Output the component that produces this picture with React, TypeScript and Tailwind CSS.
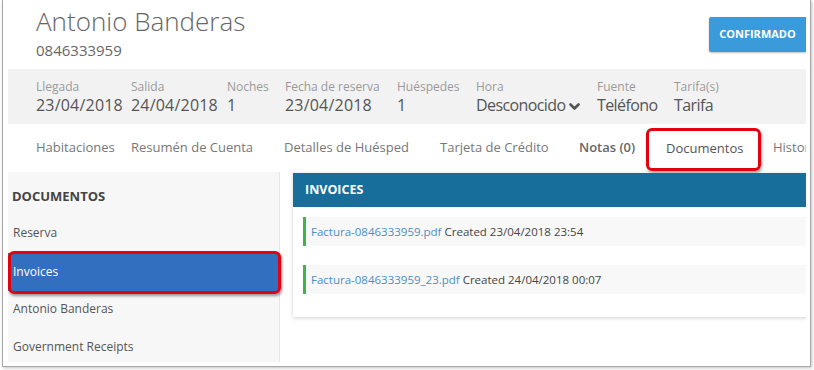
import React from "react";

const font = { fontFamily: '"Open Sans", "Noto Sans", sans-serif' };

function Chevron() {
  return (
    <svg width="11" height="8" viewBox="0 0 11 8" className="ml-[4px] mt-[3px]">
      <path d="M1.5 1.5 L5.5 5.5 L9.5 1.5" fill="none" stroke="#555" strokeWidth="2.6" strokeLinecap="round" strokeLinejoin="round" />
    </svg>
  );
}

const infos: { label: string; value: string; w: string; word?: boolean; chevron?: boolean }[] = [
  { label: "Llegada", value: "23/04/2018", w: "w-[95px]" },
  { label: "Salida", value: "24/04/2018", w: "w-[96px]" },
  { label: "Noches", value: "1", w: "w-[58px]" },
  { label: "Fecha de reserva", value: "23/04/2018", w: "w-[112px]" },
  { label: "Huéspedes", value: "1", w: "w-[79px]" },
  { label: "Hora", value: "Desconocido", w: "w-[121px]", word: true, chevron: true },
  { label: "Fuente", value: "Teléfono", w: "w-[77px]", word: true },
  { label: "Tarifa(s)", value: "Tarifa", w: "w-[80px]", word: true },
];

export default function App() {
  return (
    <div className="w-[814px] h-[370px] bg-white overflow-hidden" style={font}>
      <div className="ml-[2px] w-[809px] h-[367px] border-l border-r border-b border-[#a8a8a8] shadow-[1px_1px_3px_rgba(0,0,0,0.25)] bg-white pl-[5px] pr-[4px] pb-[4px]">
        <div className="w-[798px] h-[362px] overflow-hidden flex flex-col">
          {/* header */}
          <div className="h-[69px] flex justify-between items-start shrink-0">
            <div className="pl-[28px] pt-[4px]">
              <div className="text-[26px] leading-[34px] font-light text-[#666]">Antonio Banderas</div>
              <div className="text-[15px] leading-[20px] text-[#666] mt-[2px]">0846333959</div>
            </div>
            <div className="mt-[17px] w-[97px] h-[35px] bg-[#3b9ad9] text-white text-[11px] font-bold flex items-center justify-center shadow-[0_1px_2px_rgba(0,0,0,0.25)] rounded-l-[2px]">
              CONFIRMADO
            </div>
          </div>
          {/* info bar */}
          <div className="h-[55px] bg-[#f2f2f2] flex pl-[28px] pt-[9px] shrink-0">
            {infos.map((i) => (
              <div key={i.label} className={`${i.w} shrink-0`}>
                <div className="text-[12px] leading-[17px] text-[#9a9a9a]">{i.label}</div>
                <div className="text-[16px] leading-[21px] text-[#555] flex items-center whitespace-nowrap">
                  <span className={i.word ? "tracking-[-0.6px]" : "tracking-[0.2px]"}>{i.value}</span>
                  {i.chevron && <Chevron />}
                </div>
              </div>
            ))}
          </div>
          {/* tabs */}
          <div className="h-[48px] flex items-center pl-[28px] text-[13px] text-[#777] shrink-0 whitespace-nowrap">
            <div className="w-[95px] shrink-0">Habitaciones</div>
            <div className="w-[153px] shrink-0">Resumén de Cuenta</div>
            <div className="w-[156px] shrink-0">Detalles de Huésped</div>
            <div className="w-[139px] shrink-0">Tarjeta de Crédito</div>
            <div className="w-[67px] shrink-0 font-semibold text-[#666]">Notas (0)</div>
            <div className="w-[115px] h-[43px] shrink-0 border-[3px] border-[#e3000f] rounded-[6px] shadow-[1px_2px_3px_rgba(0,0,0,0.35)] flex items-center pl-[17px] text-[#555] mt-[2px]">
              Documentos
            </div>
            <div className="ml-[12px] shrink-0">Historial</div>
          </div>
          {/* body */}
          <div className="flex flex-1 min-h-0">
            <div className="w-[272px] shrink-0 bg-[#f7f7f7] border-r border-[#e6e6e6] text-[12px] text-[#555]">
              <div className="h-[42px] pt-[14px] pl-[4px] text-[13px] leading-[20px] font-bold text-[#444]">DOCUMENTOS</div>
              <div className="h-[38px] flex items-center pl-[5px]">Reserva</div>
              <div className="h-[38px] relative flex items-center pl-[5px] text-white bg-[#336fbf] mt-[1px] mb-[-1px]">
                Invoices
                <div className="absolute left-[0px] right-[-2px] top-[-2px] bottom-[-3px] border-[3px] border-[#e3000f] rounded-[6px] shadow-[1px_2px_3px_rgba(0,0,0,0.4)]" />
              </div>
              <div className="h-[38px] flex items-center pl-[5px]">Antonio Banderas</div>
              <div className="h-[38px] flex items-center pl-[5px]">Government Receipts</div>
            </div>
            <div className="flex-1 pl-[13px] pt-[1px]">
              <div className="w-[530px] bg-white shadow-[0_1px_4px_rgba(0,0,0,0.18)] pb-[23px]">
                <div className="h-[34px] bg-[#176e9b] text-white text-[12.5px] font-bold flex items-center pl-[12px]">INVOICES</div>
                <div className="pt-[10px] pl-[10px] flex flex-col gap-[19px] text-[11.5px]">
                  <div className="h-[29px] bg-[#f8f8f8] border-l-[3px] border-[#3cb54a] flex items-center pl-[5px] text-[#444]">
                    <span className="text-[#4a8fc6]">Factura-0846333959.pdf</span>&nbsp;Created 23/04/2018 23:54
                  </div>
                  <div className="h-[29px] bg-[#f8f8f8] border-l-[3px] border-[#3cb54a] flex items-center pl-[5px] text-[#444]">
                    <span className="text-[#4a8fc6]">Factura-0846333959_23.pdf</span>&nbsp;Created 24/04/2018 00:07
                  </div>
                </div>
              </div>
            </div>
          </div>
        </div>
      </div>
    </div>
  );
}
